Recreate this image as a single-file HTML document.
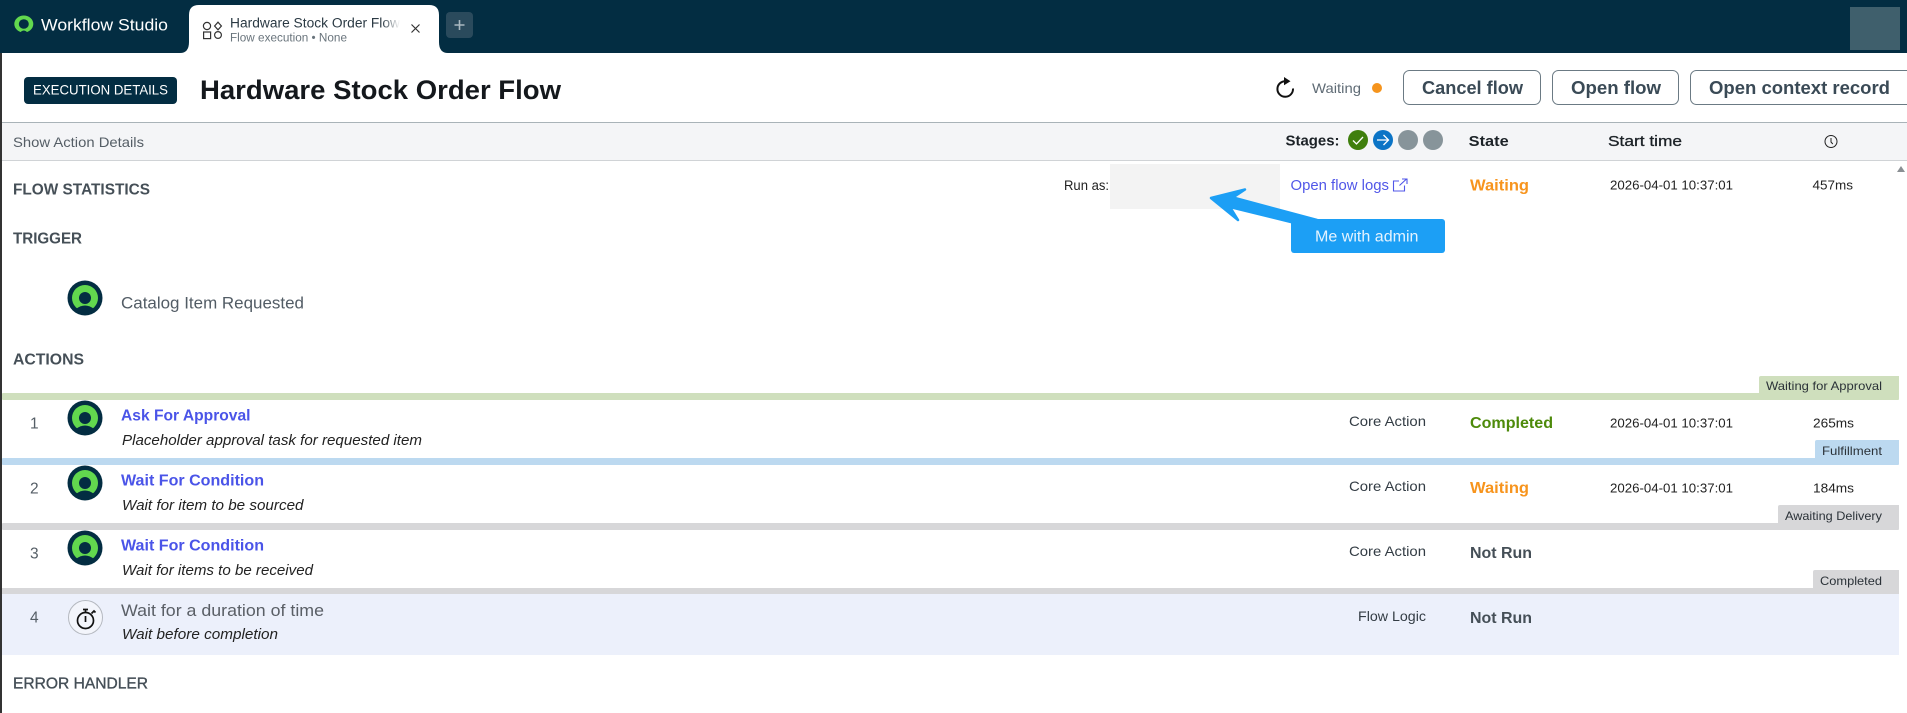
<!DOCTYPE html>
<html><head><meta charset="utf-8"><title>Workflow Studio</title>
<style>
html,body{margin:0;padding:0;width:1907px;height:713px;overflow:hidden;background:#fff}
svg{display:block}
text{font-family:"Liberation Sans",sans-serif;white-space:pre}
.b{font-weight:700}
.i{font-style:italic}
</style></head><body>
<svg width="1907" height="713" viewBox="0 0 1907 713" xmlns="http://www.w3.org/2000/svg">
<defs>
<linearGradient id="fade" x1="0" x2="1" y1="0" y2="0"><stop offset="0" stop-color="#fff" stop-opacity="0"/><stop offset="1" stop-color="#fff"/></linearGradient>
<g id="logo">
<circle cx="0" cy="0" r="17.5" fill="#032d42"/>
<circle cx="0" cy="0" r="13" fill="#62d84e"/>
<circle cx="0" cy="0" r="6" fill="#032d42"/>
<path d="M-8.500 10.500Q0 4.500 8.500 10.500L7 14H-7Z" fill="#032d42"/>
</g>
</defs>
<rect width="1907" height="713" fill="#fff"/>
<rect x="0" y="0" width="2" height="713" fill="#333"/>

<!-- top header -->
<rect x="0" y="0" width="1907" height="53" fill="#032d42"/>
<ellipse cx="23.800" cy="24" rx="9.500" ry="8.500" fill="#62d84e"/>
<ellipse cx="23.800" cy="24" rx="5" ry="4.700" fill="#032d42"/>
<path d="M19.300 33.500Q23.800 27.500 28.300 33.500Z" fill="#032d42"/>
<text x="41" y="30.500" font-size="16.500" fill="#fff" textLength="127" lengthAdjust="spacingAndGlyphs">Workflow Studio</text>
<path d="M180 53Q189 53 189 42V15Q189 5 199 5H429Q439 5 439 15V42Q439 53 448 53Z" fill="#fff"/>
<g fill="none" stroke="#333" stroke-width="1.200">
<circle cx="207" cy="26" r="3.600"/><path d="M218 22.200l3.400 3.800-3.400 3.800-3.400-3.800z"/>
<rect x="203.600" y="32" width="7" height="6.600"/><circle cx="218" cy="35" r="3.400"/>
</g>
<text x="230" y="27.500" font-size="13.500" fill="#2b3a44" textLength="170" lengthAdjust="spacingAndGlyphs">Hardware Stock Order Flow</text>
<rect x="382" y="14" width="18" height="18" fill="url(#fade)"/>
<text x="230" y="41.500" font-size="11.500" fill="#69747c" textLength="117" lengthAdjust="spacingAndGlyphs">Flow execution • None</text>
<path d="M411.500 24.500l8 8M419.500 24.500l-8 8" stroke="#333" stroke-width="1.200"/>
<rect x="446" y="12" width="27" height="26" rx="4" fill="#2a4a5c"/>
<path d="M459.500 20v10M454.500 25h10" stroke="#a9b8c0" stroke-width="1.600"/>
<rect x="1850" y="7" width="50" height="43" fill="#3f5f6c"/>

<!-- title row -->
<rect x="24" y="77" width="153" height="27" rx="4" fill="#032d42"/>
<text x="33" y="94.500" font-size="14" fill="#fff" textLength="135" lengthAdjust="spacingAndGlyphs">EXECUTION DETAILS</text>
<text x="200" y="99" font-size="26.500" class="b" fill="#14181c" textLength="361" lengthAdjust="spacingAndGlyphs">Hardware Stock Order Flow</text>
<path d="M1285.500 81.200A7.800 7.800 0 1 0 1293 88.500" fill="none" stroke="#111" stroke-width="2"/>
<path d="M1284 77l6.500 4.200-6.500 4z" fill="#111"/>
<text x="1312" y="93" font-size="14" fill="#5f6b75" textLength="49" lengthAdjust="spacingAndGlyphs">Waiting</text>
<circle cx="1377" cy="88" r="5" fill="#f5941d"/>
<g fill="#fff" stroke="#6b7a84" stroke-width="1">
<rect x="1403.500" y="70.500" width="137" height="34" rx="6"/>
<rect x="1552.500" y="70.500" width="126" height="34" rx="6"/>
<rect x="1690.500" y="70.500" width="230" height="34" rx="6"/>
</g>
<g class="b" font-size="18" fill="#3a4a56">
<text x="1422" y="94" textLength="101" lengthAdjust="spacingAndGlyphs">Cancel flow</text>
<text x="1571" y="94" textLength="90" lengthAdjust="spacingAndGlyphs">Open flow</text>
<text x="1709" y="94" textLength="181" lengthAdjust="spacingAndGlyphs">Open context record</text>
</g>

<!-- toolbar -->
<rect x="2" y="122" width="1905" height="38" fill="#f4f5f7"/>
<rect x="2" y="122" width="1905" height="1" fill="#a9b3b8"/>
<rect x="2" y="160" width="1905" height="1" fill="#d0d3d6"/>
<text x="13" y="147" font-size="14" fill="#555e66" textLength="131" lengthAdjust="spacingAndGlyphs">Show Action Details</text>
<text x="1285.500" y="145.500" font-size="15" class="b" fill="#1c2227" textLength="54" lengthAdjust="spacingAndGlyphs">Stages:</text>
<circle cx="1358" cy="140" r="10" fill="#3f7f0d"/>
<path d="M1353 140.500l3.500 3.500 6.500-7" fill="none" stroke="#fff" stroke-width="1.300"/>
<circle cx="1383" cy="140" r="10" fill="#0b74c6"/>
<path d="M1377 140h11.500M1383.500 135l5 5-5 5" fill="none" stroke="#fff" stroke-width="1.300"/>
<circle cx="1408" cy="140" r="10" fill="#87949a"/>
<circle cx="1433" cy="140" r="10" fill="#87949a"/>
<text x="1468.700" y="146" font-size="15" class="b" fill="#1c2227" textLength="40" lengthAdjust="spacingAndGlyphs">State</text>
<text x="1608" y="146" font-size="15" fill="#1c2227" stroke="#1c2227" stroke-width=".3" textLength="74" lengthAdjust="spacingAndGlyphs">Start time</text>
<circle cx="1831" cy="141.500" r="6" fill="none" stroke="#222" stroke-width="1"/>
<path d="M1831 138v4l1.800 2" fill="none" stroke="#222" stroke-width="1"/>

<!-- flow statistics -->
<text x="13" y="194.500" font-size="16" class="b" fill="#454f57" textLength="137" lengthAdjust="spacingAndGlyphs">FLOW STATISTICS</text>
<text x="1064" y="190" font-size="13.500" fill="#222" textLength="45" lengthAdjust="spacingAndGlyphs">Run as:</text>
<rect x="1110" y="164" width="170" height="45" fill="#f3f3f3"/>
<text x="1290.500" y="190" font-size="14.500" fill="#5157e8" textLength="98.500" lengthAdjust="spacingAndGlyphs">Open flow logs</text>
<path d="M1399 181h-5.500v10h11v-5.500M1399.500 185.500l7-6.500M1402 179h5v5" fill="none" stroke="#5157e8" stroke-width="1.100"/>
<text x="1470" y="190.500" font-size="16" class="b" fill="#f7941d" textLength="59" lengthAdjust="spacingAndGlyphs">Waiting</text>
<text x="1610" y="189.500" font-size="13" fill="#222" textLength="123" lengthAdjust="spacingAndGlyphs">2026-04-01 10:37:01</text>
<text x="1812.500" y="189.500" font-size="13" fill="#222" textLength="40.500" lengthAdjust="spacingAndGlyphs">457ms</text>
<path d="M1901 166l4 6h-8z" fill="#8a8f93"/>

<!-- annotation -->
<rect x="1291" y="219" width="154" height="34" rx="3" fill="#1c9ff5"/>
<path d="M1211 198L1245 189.500L1233 197.500L1317 220L1291 222L1230 207L1238 220Z" fill="#1c9ff5" stroke="#1c9ff5" stroke-width="2.500" stroke-linejoin="round"/>
<text x="1315" y="241.500" font-size="15.500" fill="#e4f3ff" textLength="103.500" lengthAdjust="spacingAndGlyphs">Me with admin</text>

<!-- trigger -->
<text x="13" y="243.500" font-size="16" class="b" fill="#454f57" textLength="69" lengthAdjust="spacingAndGlyphs">TRIGGER</text>
<use href="#logo" x="85" y="298"/>
<text x="121" y="308.500" font-size="16.500" fill="#525c65" textLength="183" lengthAdjust="spacingAndGlyphs">Catalog Item Requested</text>
<text x="13" y="364.500" font-size="16" class="b" fill="#454f57" textLength="71" lengthAdjust="spacingAndGlyphs">ACTIONS</text>

<!-- stage tags and bars -->
<path d="M1759 394V378q0-2 2-2H1899V394Z" fill="#cfdfbd"/>
<rect x="2" y="393" width="1897" height="7" rx="1" fill="#cfdfbd"/>
<text x="1766" y="390" font-size="12" fill="#2b3238" textLength="116" lengthAdjust="spacingAndGlyphs">Waiting for Approval</text>
<path d="M1815 459V442q0-2 2-2H1899V459Z" fill="#bcd9f0"/>
<rect x="2" y="458" width="1897" height="7" rx="1" fill="#bcd9f0"/>
<text x="1822" y="455" font-size="12" fill="#2b3238" textLength="60" lengthAdjust="spacingAndGlyphs">Fulfillment</text>
<path d="M1778 524V507q0-2 2-2H1899V524Z" fill="#d7d7d9"/>
<rect x="2" y="523" width="1897" height="7" rx="1" fill="#d7d7d9"/>
<text x="1785" y="520" font-size="12" fill="#2b3238" textLength="97" lengthAdjust="spacingAndGlyphs">Awaiting Delivery</text>
<path d="M1813 589V572q0-2 2-2H1899V589Z" fill="#d7d7d9"/>
<rect x="2" y="594" width="1897" height="61" fill="#ecf0fb"/>
<rect x="2" y="588" width="1897" height="6" fill="#d7d7d9"/>
<text x="1820" y="585" font-size="12" fill="#2b3238" textLength="62" lengthAdjust="spacingAndGlyphs">Completed</text>

<!-- numbers -->
<g font-size="15.500" fill="#555e66">
<text x="30" y="428.500">1</text><text x="30" y="493.500">2</text><text x="30" y="558.500">3</text><text x="30" y="622.500">4</text>
</g>
<!-- icons -->
<use href="#logo" x="85" y="418"/>
<use href="#logo" x="85" y="483"/>
<use href="#logo" x="85" y="548"/>
<circle cx="85.500" cy="617.500" r="17" fill="#f3f5fb" stroke="#b5b9c0" stroke-width="1"/>
<circle cx="85.500" cy="620.500" r="8" fill="none" stroke="#111" stroke-width="1.700"/>
<path d="M85.500 609.500v3.500M83 609.500h5M85.500 616v6" stroke="#111" stroke-width="1.700" fill="none"/>
<path d="M91.500 613.500l2.500-2.500 1.500 1.500" stroke="#111" stroke-width="1.700" fill="none"/>

<!-- rows text -->
<g class="b" font-size="16" fill="#4a54e8">
<text x="121" y="420.500" textLength="129.500" lengthAdjust="spacingAndGlyphs">Ask For Approval</text>
<text x="121" y="485.500" textLength="143" lengthAdjust="spacingAndGlyphs">Wait For Condition</text>
<text x="121" y="550.500" textLength="143" lengthAdjust="spacingAndGlyphs">Wait For Condition</text>
</g>
<text x="121" y="616" font-size="17" fill="#5a5f66" textLength="203" lengthAdjust="spacingAndGlyphs">Wait for a duration of time</text>
<g class="i" font-size="14.500" fill="#222">
<text x="122" y="445" textLength="300" lengthAdjust="spacingAndGlyphs">Placeholder approval task for requested item</text>
<text x="122" y="510" textLength="181.500" lengthAdjust="spacingAndGlyphs">Wait for item to be sourced</text>
<text x="122" y="575" textLength="191" lengthAdjust="spacingAndGlyphs">Wait for items to be received</text>
<text x="122" y="639" textLength="156" lengthAdjust="spacingAndGlyphs">Wait before completion</text>
</g>
<g font-size="14" fill="#333c44">
<text x="1349" y="426" textLength="77" lengthAdjust="spacingAndGlyphs">Core Action</text>
<text x="1349" y="491" textLength="77" lengthAdjust="spacingAndGlyphs">Core Action</text>
<text x="1349" y="556" textLength="77" lengthAdjust="spacingAndGlyphs">Core Action</text>
<text x="1358" y="621" textLength="68" lengthAdjust="spacingAndGlyphs">Flow Logic</text>
</g>
<g class="b" font-size="16">
<text x="1470" y="428" fill="#4d8a0a" textLength="83" lengthAdjust="spacingAndGlyphs">Completed</text>
<text x="1470" y="493" fill="#f7941d" textLength="59" lengthAdjust="spacingAndGlyphs">Waiting</text>
<text x="1470" y="558" fill="#454f57" textLength="62" lengthAdjust="spacingAndGlyphs">Not Run</text>
<text x="1470" y="623" fill="#454f57" textLength="62" lengthAdjust="spacingAndGlyphs">Not Run</text>
</g>
<g font-size="13" fill="#222">
<text x="1610" y="427.500" textLength="123" lengthAdjust="spacingAndGlyphs">2026-04-01 10:37:01</text>
<text x="1813" y="427.500" textLength="41" lengthAdjust="spacingAndGlyphs">265ms</text>
<text x="1610" y="492.500" textLength="123" lengthAdjust="spacingAndGlyphs">2026-04-01 10:37:01</text>
<text x="1813" y="492.500" textLength="41" lengthAdjust="spacingAndGlyphs">184ms</text>
</g>
<text x="13" y="688.500" font-size="16" fill="#454f57" stroke="#454f57" stroke-width=".35" textLength="135" lengthAdjust="spacingAndGlyphs">ERROR HANDLER</text>
</svg>
</body></html>
